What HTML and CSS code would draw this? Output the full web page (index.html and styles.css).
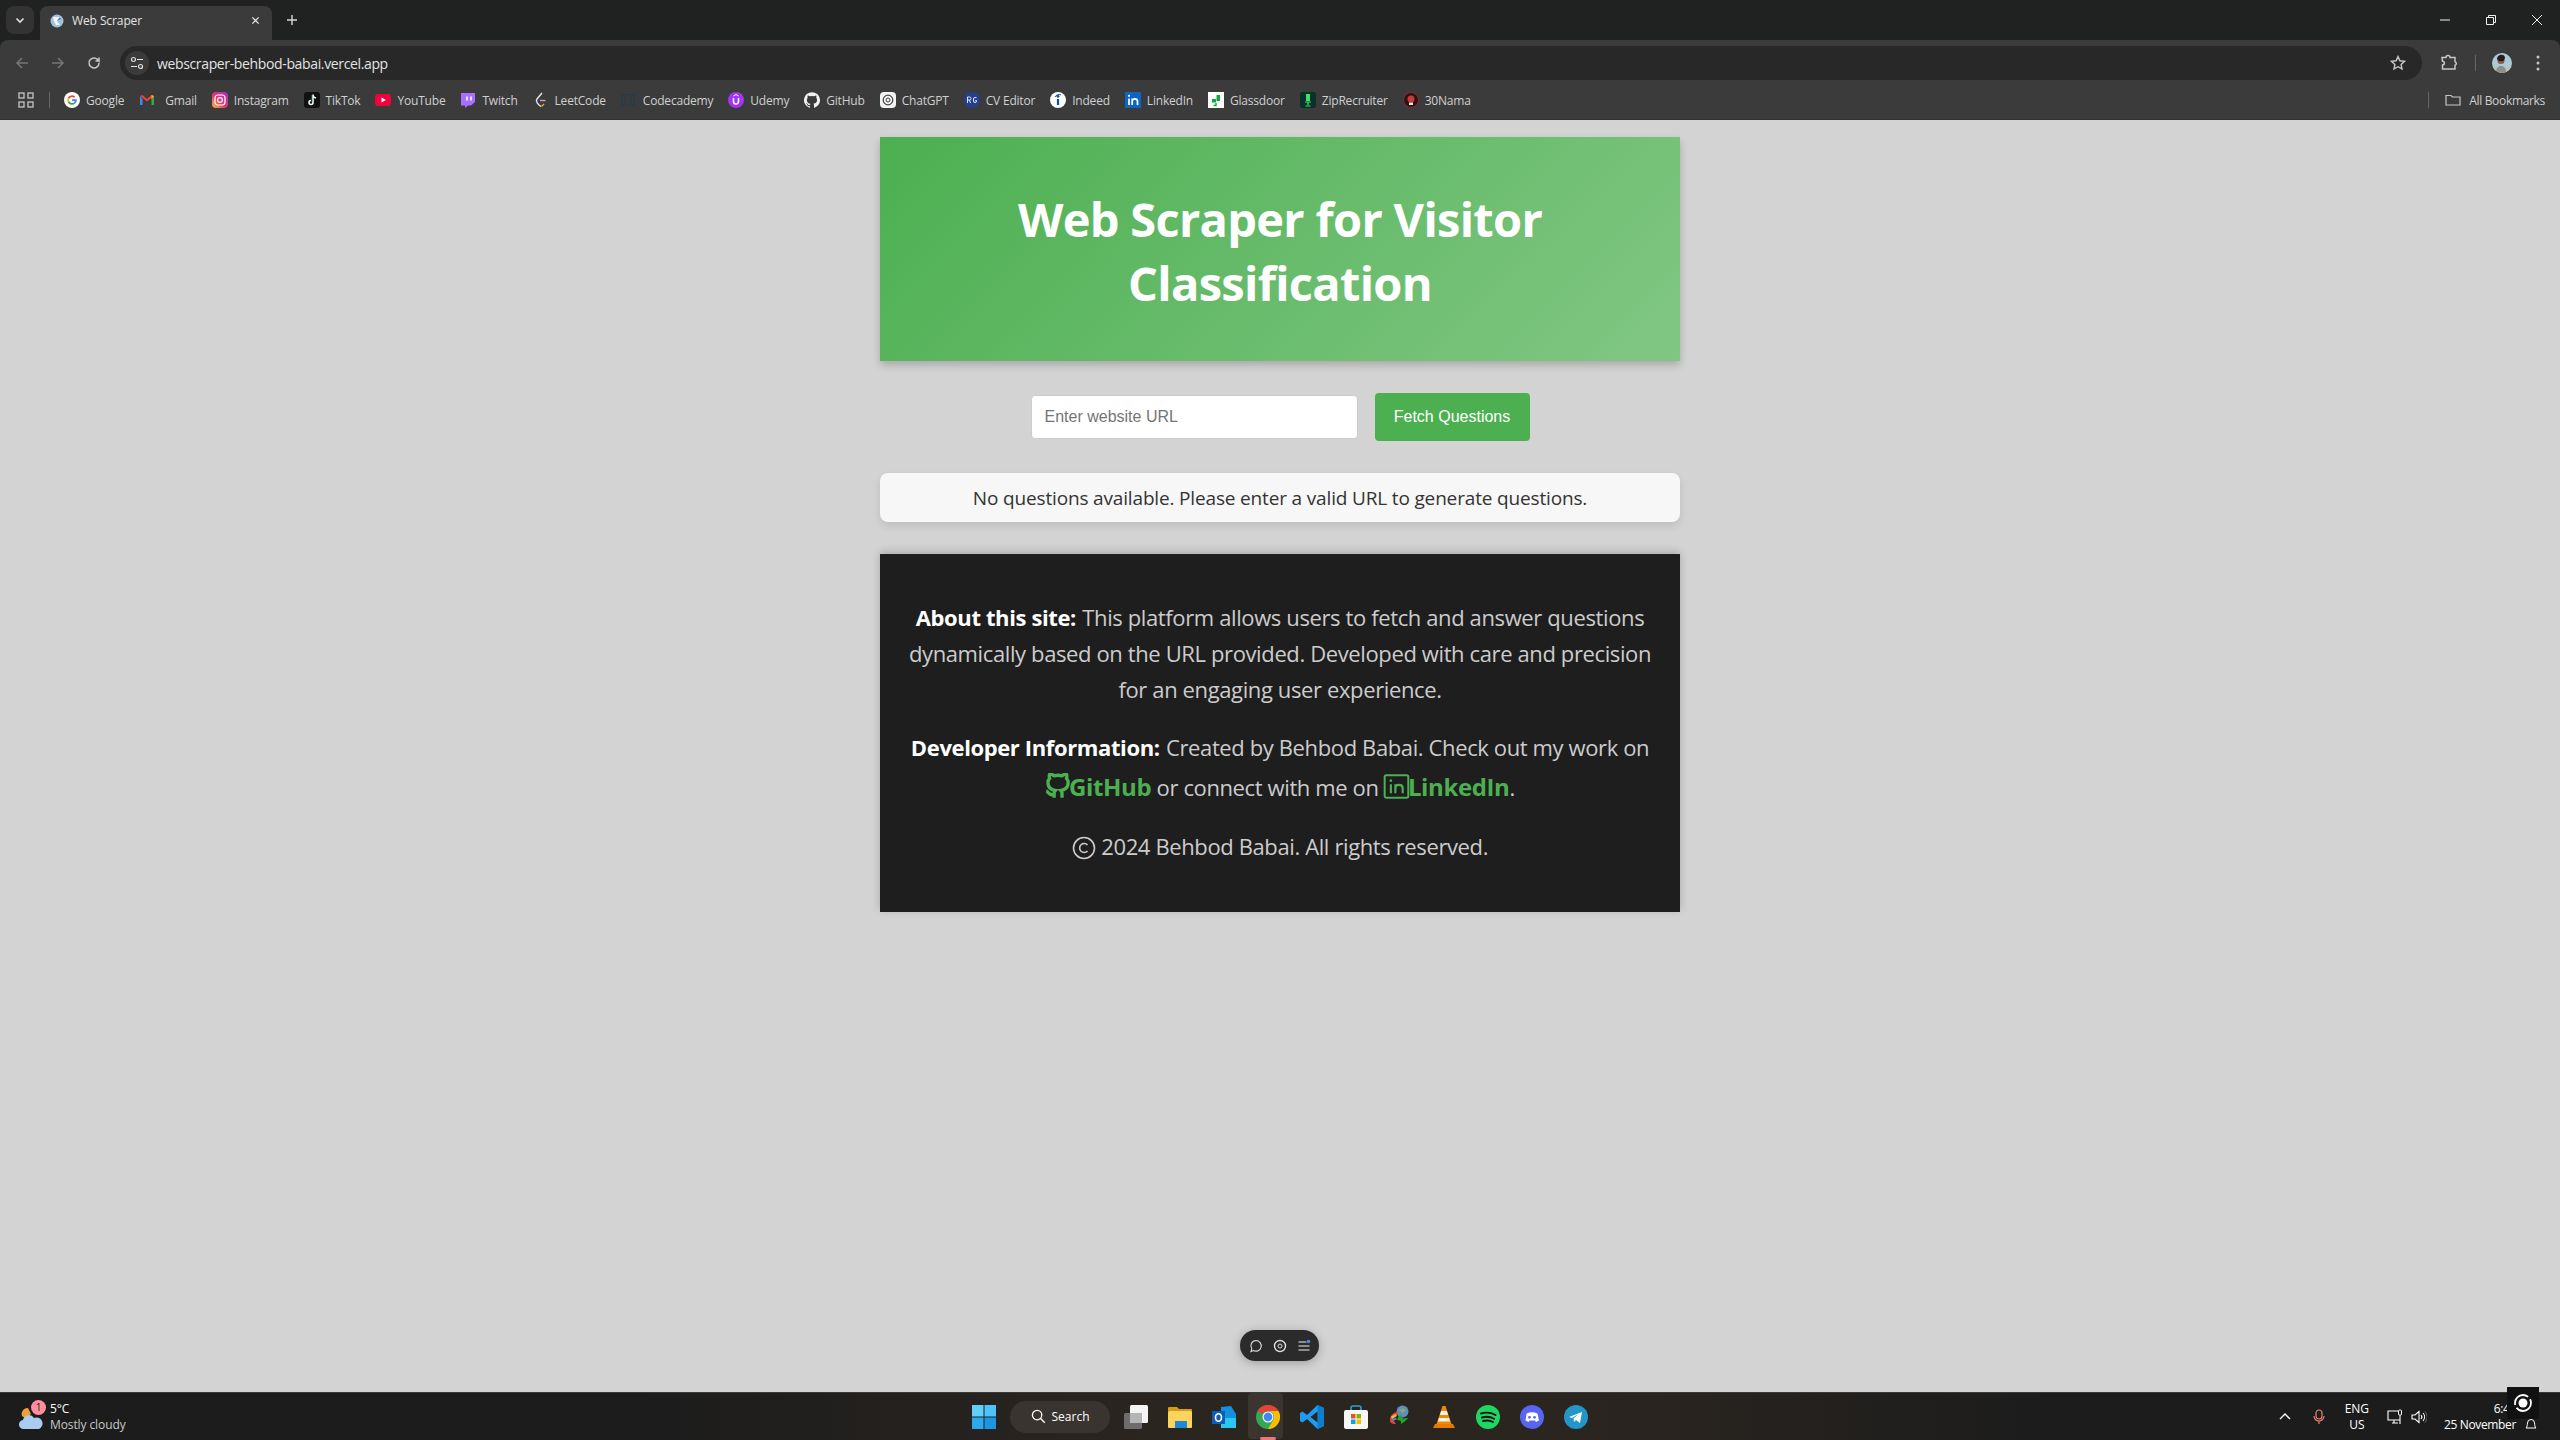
FILE: index.html
```html
<!DOCTYPE html>
<html lang="en">
<head>
    <meta charset="UTF-8">
    <meta name="viewport" content="width=device-width, initial-scale=1.0">
    <title>Web Scraper</title>
    <link rel="stylesheet" href="styles.css">
</head>
<body>

    <!-- browser top -->
    <div class="browser">
    <div class="tabstrip">
        <div class="tab-search"><svg class="ic-12" viewBox="0 0 12 12"><path d="M2.5 4.5 6 8l3.5-3.5" fill="none" stroke="#e3e3e3" stroke-width="1.6"/></svg></div>
        <div class="tab">
            <svg class="favicon" viewBox="0 0 14 14"><circle cx="7" cy="7" r="6.5" fill="#9fc3e0"/><path d="M3 3h8L7 7l3 4H6L4 7z" fill="#f2f6fa"/><path d="M7 7l3-4 1 2z" fill="#3f6f9a"/></svg>
            <span class="tab-title">Web Scraper</span>
            <svg class="tab-close" viewBox="0 0 10 10"><path d="M1.5 1.5l7 7m0-7l-7 7" stroke="#e3e3e3" stroke-width="1.4"/></svg>
        </div>
        <svg class="new-tab" viewBox="0 0 12 12"><path d="M6 1v10M1 6h10" stroke="#d5d5d5" stroke-width="1.4"/></svg>
        <div class="win-controls">
            <svg class="win-btn" viewBox="0 0 12 12"><path d="M1 6h10" stroke="#eee" stroke-width="1"/></svg>
            <svg class="win-btn" viewBox="0 0 12 12"><path d="M1.5 3.5h7v7h-7zM3.5 3.5v-2h7v7h-2" fill="none" stroke="#eee" stroke-width="1"/></svg>
            <svg class="win-btn" viewBox="0 0 12 12"><path d="M1 1l10 10M11 1L1 11" stroke="#eee" stroke-width="1"/></svg>
        </div>
    </div>

    <div class="toolbar">
        <svg class="nav-btn" viewBox="0 0 16 16"><path d="M14 8H3M8 3L3 8l5 5" fill="none" stroke="#777" stroke-width="1.5"/></svg>
        <svg class="nav-btn" viewBox="0 0 16 16"><path d="M2 8h11M8 3l5 5-5 5" fill="none" stroke="#777" stroke-width="1.5"/></svg>
        <svg class="nav-btn" viewBox="0 0 16 16"><path d="M13 8a5 5 0 1 1-1.5-3.6L13 6V2.5M13 6H9.5" fill="none" stroke="#c7c7c7" stroke-width="1.5"/></svg>
        <div class="omnibox">
            <div class="site-info"><svg class="ic-14" viewBox="0 0 14 14"><g fill="none" stroke="#e3e3e3" stroke-width="1.2"><circle cx="3.5" cy="3.5" r="2"/><circle cx="10.5" cy="10.5" r="2"/><path d="M7 3.5h6M1 10.5h6"/></g></svg></div>
            <span class="url">webscraper-behbod-babai.vercel.app</span>
            <svg class="star" viewBox="0 0 16 16"><path d="M8 1.6l1.9 4.2 4.6.5-3.4 3.1.9 4.5L8 11.7l-4 2.2.9-4.5-3.4-3.1 4.6-.5z" fill="none" stroke="#c7c7c7" stroke-width="1.4"/></svg>
        </div>
        <svg class="ext-btn" viewBox="0 0 18 18"><path d="M2 3.5h4a2 2 0 0 1 4 0h5v4.2a1.9 1.9 0 0 1 0 3.6V15H2.5v-4a1.9 1.9 0 0 0 0-3.8z" fill="none" stroke="#c7c7c7" stroke-width="1.5"/></svg>
        <span class="tool-sep"></span>
        <svg class="avatar" viewBox="0 0 20 20"><defs><clipPath id="av"><circle cx="10" cy="10" r="10"/></clipPath></defs><g clip-path="url(#av)"><rect width="20" height="20" fill="#a9cbd8"/><rect y="14" width="20" height="6" fill="#c5c2a8"/><path d="M4 20c0-5 2-7 5-7s5 2 5 7z" fill="#8c8f8a"/><circle cx="9" cy="7.500" r="3.600" fill="#8a5a48"/><path d="M5 6c0-5 8-6 8-1l-1 2H6z" fill="#2a1c1c"/><path d="M6.500 7.500h5" stroke="#1c1414"/></g></svg>
        <svg class="menu-btn" viewBox="0 0 4 16"><circle cx="2" cy="2" r="1.500" fill="#c7c7c7"/><circle cx="2" cy="8" r="1.500" fill="#c7c7c7"/><circle cx="2" cy="14" r="1.500" fill="#c7c7c7"/></svg>
    </div>

    <div class="bookmarks">
        <svg class="apps" viewBox="0 0 16 16"><g fill="none" stroke="#c7c7c7" stroke-width="1.300"><rect x="1" y="1" width="5" height="5"/><rect x="10" y="1" width="5" height="5"/><rect x="1" y="10" width="5" height="5"/><rect x="10" y="10" width="5" height="5"/></g></svg>
        <span class="book-sep"></span>
        <div class="book-list">
            <a class="book"><svg class="book-ic" viewBox="0 0 16 16"><circle cx="8" cy="8" r="8" fill="#fff"/><path d="M8 3.200a4.800 4.800 0 0 1 3.200 1.200L10 5.700A3 3 0 0 0 5.200 7L3.700 5.800A4.800 4.800 0 0 1 8 3.200z" fill="#ea4335"/><path d="M3.700 5.800 5.200 7a3 3 0 0 0 0 2l-1.500 1.200a4.800 4.800 0 0 1 0-4.400z" fill="#fbbc05"/><path d="M3.700 10.200 5.200 9a3 3 0 0 0 4.600 1.500l1.400 1.100A4.800 4.800 0 0 1 3.700 10.200z" fill="#34a853"/><path d="M12.800 7.200H8v1.900h2.700a2.300 2.300 0 0 1-.9 1.400l1.400 1.100a4.800 4.800 0 0 0 1.600-4.400z" fill="#4285f4"/></svg>Google</a>
            <a class="book book-wide"><svg class="book-ic" viewBox="0 0 16 16"><path d="M1 4v9h2.500V7.500z" fill="#4285f4"/><path d="M15 4v9h-2.500V7.500z" fill="#34a853"/><path d="M1 4l2.500-1L8 7l4.500-4L15 4 8 9.500z" fill="#ea4335"/><path d="M12.500 3 15 4l-2.500 3.500z" fill="#fbbc05"/></svg>Gmail</a>
            <a class="book"><svg class="book-ic" viewBox="0 0 16 16"><defs><linearGradient id="ig" x1="0" y1="1" x2="1" y2="0"><stop offset="0" stop-color="#fdc13a"/><stop offset=".45" stop-color="#e8336c"/><stop offset="1" stop-color="#a030d0"/></linearGradient></defs><rect width="16" height="16" rx="4" fill="url(#ig)"/><rect x="3" y="3" width="10" height="10" rx="3" fill="none" stroke="#fff" stroke-width="1.200"/><circle cx="8" cy="8" r="2.400" fill="none" stroke="#fff" stroke-width="1.200"/></svg>Instagram</a>
            <a class="book"><svg class="book-ic" viewBox="0 0 16 16"><rect width="16" height="16" rx="3" fill="#111"/><path d="M9 2.500V10.500a2 2 0 1 1-2-2M9 3c.3 1.800 1.500 2.800 3 3" fill="none" stroke="#fff" stroke-width="1.500"/><path d="M8 3v7.500" stroke="#25f4ee" stroke-width=".5"/></svg>TikTok</a>
            <a class="book"><svg class="book-ic" viewBox="0 0 16 16"><rect y="2" width="16" height="12" rx="3" fill="#f0003c"/><path d="M6.500 5.500v5L11 8z" fill="#fff"/></svg>YouTube</a>
            <a class="book"><svg class="book-ic" viewBox="0 0 16 16"><path d="M1 1h14v9l-4 3.500H8L5 16v-2.500H1z" fill="#a970ff"/><path d="M7 4.500v4M11 4.500v4" stroke="#fff" stroke-width="1.500"/></svg>Twitch</a>
            <a class="book"><svg class="book-ic" viewBox="0 0 16 16"><path d="M9 1 4 7c-1.500 2 0 4 2 6l2 1.500" fill="none" stroke="#e7e7e7" stroke-width="1.400"/><path d="M11 12l-2.500 2.500" stroke="#f89f1b" stroke-width="1.400"/><path d="M7 8.500h5.500" stroke="#b3b3b3" stroke-width="1.400"/></svg>LeetCode</a>
            <a class="book"><svg class="book-ic" viewBox="0 0 16 16"><path d="M3 2.500h-2v11h2M11 2.500h2v11h-2" fill="none" stroke="#1f3a4d" stroke-width="1"/><rect x="4" y="2.500" width="6" height="11" fill="none" stroke="#1f3a4d" stroke-width=".6"/></svg>Codecademy</a>
            <a class="book"><svg class="book-ic" viewBox="0 0 16 16"><circle cx="8" cy="8" r="8" fill="#a435f0"/><path d="M5.500 6v3.500a2.500 2.500 0 0 0 5 0V6" fill="none" stroke="#fff" stroke-width="1.500"/><path d="M5.500 4 8 2.500 10.500 4" fill="none" stroke="#fff" stroke-width="1"/></svg>Udemy</a>
            <a class="book"><svg class="book-ic" viewBox="0 0 24 24"><path fill="#f1f1f1" d="M12 .3a12 12 0 0 0-3.800 23.400c.6.100.8-.3.800-.6v-2c-3.300.7-4-1.600-4-1.600-.6-1.400-1.400-1.800-1.400-1.800-1-.7.100-.7.100-.7 1.200 0 1.900 1.200 1.900 1.200 1 1.800 2.800 1.300 3.500 1 0-.8.400-1.300.7-1.600-2.700-.3-5.500-1.300-5.500-6 0-1.200.5-2.300 1.300-3.100-.2-.4-.6-1.600 0-3.200 0 0 1-.3 3.400 1.200a11.500 11.500 0 0 1 6 0c2.300-1.500 3.300-1.200 3.300-1.200.6 1.600.2 2.800 0 3.200.9.800 1.300 1.900 1.300 3.200 0 4.600-2.800 5.600-5.500 5.900.5.400.9 1 .9 2.200v3.300c0 .3.100.7.8.6A12 12 0 0 0 12 .3"/></svg>GitHub</a>
            <a class="book"><svg class="book-ic" viewBox="0 0 16 16"><rect width="16" height="16" rx="4" fill="#f4f4f4"/><circle cx="8" cy="8" r="4.800" fill="none" stroke="#444" stroke-width="1.200"/><circle cx="8" cy="8" r="2" fill="none" stroke="#444" stroke-width="1"/></svg>ChatGPT</a>
            <a class="book"><svg class="book-ic" viewBox="0 0 16 16"><circle cx="8" cy="8" r="8" fill="#24408e"/><path d="M3.500 11V5h2a1.500 1.500 0 0 1 0 3h-2m2 0 1 3M12.500 5.500h-1.500a1.500 1.500 0 0 0-1.500 1.500v2a1.500 1.500 0 0 0 3 0V8.500h-1.200" fill="none" stroke="#dfe6f5" stroke-width="1"/></svg>CV Editor</a>
            <a class="book"><svg class="book-ic" viewBox="0 0 16 16"><circle cx="8" cy="8" r="8" fill="#fff"/><path d="M8 7v6" stroke="#0a4ea8" stroke-width="2.200"/><circle cx="8" cy="4.300" r="1.400" fill="#0a4ea8"/><path d="M5 5C6 2.800 9 2 11 2.800" fill="none" stroke="#0a4ea8"/></svg>Indeed</a>
            <a class="book"><svg class="book-ic" viewBox="0 0 16 16"><rect width="16" height="16" fill="#0a66c2"/><path d="M4 6.500V13M7.200 13V6.500m0 3c0-3.500 5.300-3.500 5.300 0V13" fill="none" stroke="#fff" stroke-width="1.700"/><circle cx="4" cy="3.800" r="1.100" fill="#fff"/></svg>LinkedIn</a>
            <a class="book"><svg class="book-ic" viewBox="0 0 16 16"><rect width="16" height="16" fill="#fff"/><path d="M8.500 3h3.500v6H8.500zM8 10.500H4V7h4z" fill="#0caa41"/><path d="M8 11v2.500H5.500" fill="none" stroke="#0caa41" stroke-width="1.500"/></svg>Glassdoor</a>
            <a class="book"><svg class="book-ic" viewBox="0 0 16 16"><rect width="16" height="16" rx="2" fill="#08312a"/><path d="M6 2h4v7H6z" fill="#3fe06a"/><path d="M5 10h6M8 10v3M5.500 14h5" stroke="#3fe06a" stroke-width="1.200"/></svg>ZipRecruiter</a>
            <a class="book"><svg class="book-ic" viewBox="0 0 16 16"><circle cx="8" cy="8" r="7.500" fill="#2a1416" stroke="#8c2b2b"/><circle cx="8" cy="7" r="3.500" fill="#c8393b"/><path d="M6 10.500h4V13H6z" fill="#e5e5e5"/></svg>30Nama</a>
        </div>
        <span class="book-sep book-sep-end"></span>
        <a class="book all-books"><svg class="book-ic" viewBox="0 0 16 16"><path d="M1 3.500h5l1.500 1.500H15v8H1z" fill="none" stroke="#c7c7c7" stroke-width="1.200"/></svg>All Bookmarks</a>
    </div>
    </div>

    <!-- pagina -->
    <main class="page">
        <header class="hero">
            <h1>Web Scraper for Visitor Classification</h1>
        </header>

        <form class="url-form">
            <input type="text" class="url-input" placeholder="Enter website URL">
            <button type="button" class="fetch-btn">Fetch Questions</button>
        </form>

        <div class="notice">No questions available. Please enter a valid URL to generate questions.</div>

        <footer class="about">
            <p><strong>About this site:</strong> This platform allows users to fetch and answer questions dynamically based on the URL provided. Developed with care and precision for an engaging user experience.</p>
            <p class="dev-line"><strong>Developer Information:</strong> Created by Behbod Babai. Check out my work on
                <a class="about-link"><svg class="link-ic" viewBox="0 0 24 24"><path d="M9 19c-5 1.500-5-2.500-7-3m14 6v-3.870a3.370 3.370 0 0 0-.94-2.610c3.140-.35 6.440-1.540 6.440-7A5.440 5.440 0 0 0 20 4.770 5.070 5.070 0 0 0 19.910 1S18.730.65 16 2.480a13.380 13.380 0 0 0-7 0C6.270.65 5.090 1 5.090 1A5.070 5.070 0 0 0 5 4.770a5.440 5.440 0 0 0-1.500 3.750c0 5.420 3.300 6.610 6.440 7A3.370 3.370 0 0 0 9 18.130V22" fill="none" stroke="#4caf50" stroke-width="3"/></svg>GitHub</a>
                or connect with me on
                <a class="about-link"><svg class="link-ic" viewBox="0 0 24 24"><rect x="1.500" y="2" width="21" height="20" rx="1.500" fill="none" stroke="#4caf50" stroke-width="1.800"/><path d="M7 10v8M11 18v-8m0 3.500c0-4 6.500-4 6.500 0V18" fill="none" stroke="#4caf50" stroke-width="1.900"/><circle cx="7" cy="6.800" r="1.200" fill="#4caf50"/></svg>LinkedIn</a>.</p>
            <p class="copy"><svg class="copy-ic" viewBox="0 0 24 24"><circle cx="12" cy="12" r="10.500" fill="none" stroke="#ccc" stroke-width="1.600"/><path d="M15.500 9a4.500 4.500 0 1 0 0 6" fill="none" stroke="#ccc" stroke-width="1.600"/></svg> 2024 Behbod Babai. All rights reserved.</p>
        </footer>

        <!-- barra flotante -->
        <div class="float-pill">
            <svg class="ic-14" viewBox="0 0 14 14"><path d="M7 1.500a5.300 5.300 0 1 1-2.500 10L2 12.500l.8-2.700A5.300 5.300 0 0 1 7 1.500z" fill="none" stroke="#ddd" stroke-width="1.100"/></svg>
            <svg class="ic-14" viewBox="0 0 14 14"><circle cx="7" cy="7" r="5.500" fill="none" stroke="#ddd" stroke-width="1.400"/><circle cx="7" cy="7" r="2" fill="none" stroke="#ddd"/></svg>
            <svg class="ic-14" viewBox="0 0 14 14"><path d="M1.500 3h8M1.500 7h11M1.500 11h11" stroke="#eee" stroke-width="1.200"/><circle cx="11.500" cy="2.500" r="1.800" fill="#3b8eea"/></svg>
        </div>
    </main>

    <!-- barra de tareas -->
    <div class="taskbar">
        <div class="weather">
            <div class="weather-ic">
                <svg class="weather-svg" viewBox="0 0 24 26"><path d="M3 12a6 6 0 0 1 6-8l3 6-6 4z" fill="#f0a030"/><path d="M5 25a4.500 4.500 0 0 1-1-9 6 6 0 0 1 11-2 5 5 0 0 1 5 11z" fill="#a9cdf0"/></svg>
                <span class="weather-badge">1</span>
            </div>
            <div class="weather-text">
                <span class="temp">5°C</span>
                <span class="sky">Mostly cloudy</span>
            </div>
        </div>

        <div class="dock">
            <svg class="dock-ic" viewBox="0 0 24 24"><g fill="#4cc2ff"><rect width="11.500" height="11.500" fill="#5fd0fa"/><rect x="12.500" width="11.500" height="11.500" fill="#4cc2ff"/><rect y="12.500" width="11.500" height="11.500" fill="#2ca8ee"/><rect x="12.500" y="12.500" width="11.500" height="11.500" fill="#1a96e2"/></g></svg>
            <div class="search-pill"><svg class="search-ic" viewBox="0 0 16 16"><circle cx="6.500" cy="6.500" r="5" fill="none" stroke="#fff" stroke-width="1.400"/><path d="M10.200 10.200l4.500 4.500" stroke="#fff" stroke-width="1.500"/></svg>Search</div>
            <svg class="dock-ic" viewBox="0 0 24 24"><rect x="6" y="0" width="18" height="18" rx="1.500" fill="#f4f4f4"/><rect x="0" y="8" width="18" height="16" rx="1.500" fill="#6d6d6d"/><rect x="6" y="8" width="12" height="10" fill="#b5b5b5"/></svg>
            <svg class="dock-ic" viewBox="0 0 24 24"><path d="M0 3a1 1 0 0 1 1-1h8l2 2h12a1 1 0 0 1 1 1v1H0z" fill="#d69c13"/><rect y="6" width="24" height="17" rx="1" fill="#fcd45c"/><rect x="7" y="16" width="12" height="7" fill="#1e88d8"/></svg>
            <svg class="dock-ic" viewBox="0 0 24 24"><path d="M9 2 19 1l5 8v14H9z" fill="#1490df"/><path d="M9 13h15v10H9z" fill="#28c8f0"/><rect y="6" width="13" height="13" fill="#0a5fb4"/><ellipse cx="6.500" cy="12.500" rx="3" ry="3.800" fill="none" stroke="#fff" stroke-width="1.600"/></svg>
            <div class="dock-active">
                <svg class="dock-ic" viewBox="0 0 24 24"><circle cx="12" cy="12" r="12" fill="#34a853"/><path d="M12 0a12 12 0 0 1 10.400 6H12a6 6 0 0 0-5.200 3L1.600 6A12 12 0 0 1 12 0z" fill="#ea4335"/><path d="M22.400 6A12 12 0 0 1 12 24l5.200-9A6 6 0 0 0 12 6z" fill="#fbbc05"/><circle cx="12" cy="12" r="5.500" fill="#fff"/><circle cx="12" cy="12" r="4.400" fill="#4285f4"/></svg>
                <span class="active-bar"></span>
            </div>
            <svg class="dock-ic" viewBox="0 0 24 24"><path d="M17.500 0 24 3v18l-6.500 3L7 14l-4.500 3.500L0 16V8l2.500-1.500L7 10z" fill="#1f9cf0"/><path d="M17.500 0 24 3v18l-6.500 3z" fill="#0a7fcf"/><path d="M17.500 6.500 10.500 12l7 5.500z" fill="#2b2520"/></svg>
            <svg class="dock-ic" viewBox="0 0 24 24"><path d="M7 6V3a2 2 0 0 1 2-2h6a2 2 0 0 1 2 2v3" fill="none" stroke="#2a9fd8" stroke-width="1.600"/><rect y="5" width="24" height="19" rx="2" fill="#f7f7f7"/><rect x="7" y="9" width="4.500" height="4.500" fill="#f25022"/><rect x="12.500" y="9" width="4.500" height="4.500" fill="#7fba00"/><rect x="7" y="14.500" width="4.500" height="4.500" fill="#00a4ef"/><rect x="12.500" y="14.500" width="4.500" height="4.500" fill="#ffb900"/></svg>
            <svg class="dock-ic" viewBox="0 0 24 24"><circle cx="14.500" cy="6.500" r="6" fill="#5f8fc0"/><path d="M11 5c2-2 5-2 7 0l-3 3z" fill="#7fb069"/><path d="M2 15a8 8 0 0 1 8-8l.5 2.500a5 5 0 0 0-5.500 5.500l3 4C4 19 2 18 2 15z" fill="#e24a3b"/><path d="M3 11.500l5-2.500 1 2-5 3z" fill="#f4b93a"/><path d="M4 14l4-1.500.5 2L5 16z" fill="#3f8fdc"/><path d="M11 10.500h3l.5 3 6-.5-7 6-1-3.500-3.500-.5z" fill="#22a82c"/></svg>
            <svg class="dock-ic" viewBox="0 0 24 24"><path d="M10.500 1h3l6 18H4.500z" fill="#f08a00"/><path d="M9.200 6h5.600l1.300 4H7.900zM7 13h10l1 3.500H6z" fill="#f4f4f4"/><path d="M3 19h18l2 4H1z" fill="#e87a00"/></svg>
            <svg class="dock-ic" viewBox="0 0 24 24"><circle cx="12" cy="12" r="12" fill="#1ed760"/><path d="M5 8.500c5-1.500 10-1 14.500 1.500M6 12.500c4-1.200 8.500-.8 12 1.200M7 16c3.500-1 7-.6 10 1" fill="none" stroke="#111" stroke-width="1.900" stroke-linecap="round"/></svg>
            <svg class="dock-ic" viewBox="0 0 24 24"><circle cx="12" cy="12" r="12" fill="#5865f2"/><path d="M6.500 8.500c3.500-1.700 7.500-1.700 11 0l1.500 7-3 1.500-1-1.500h-5.500L8.500 17l-3-1.500z" fill="#fff"/><circle cx="9.500" cy="12.300" r="1.400" fill="#5865f2"/><circle cx="14.500" cy="12.300" r="1.400" fill="#5865f2"/></svg>
            <svg class="dock-ic" viewBox="0 0 24 24"><circle cx="12" cy="12" r="12" fill="#2296c9"/><path d="M5 12l13-5-2 11-4-3-2 2-.5-3.500 5-4.500-6.500 4z" fill="#fff"/></svg>
        </div>

        <div class="tray">
            <svg class="tray-ic chevron" viewBox="0 0 12 12"><path d="M1 8l5-5 5 5" fill="none" stroke="#fff" stroke-width="1.400"/></svg>
            <svg class="tray-ic mic" viewBox="0 0 12 16"><rect x="3" y="1" width="6" height="9" rx="3" fill="none" stroke="#e9806e" stroke-width="1.200"/><path d="M1 7a5 5 0 0 0 10 0M6 12v3" fill="none" stroke="#e9806e" stroke-width="1.200"/></svg>
            <div class="lang"><span>ENG</span><span>US</span></div>
            <svg class="tray-ic net" viewBox="0 0 16 16"><path d="M11 2H1v9h12V8M5 14h6M7 11v3M13 6v9" fill="none" stroke="#fff" stroke-width="1.100"/><rect x="11.500" y="1" width="3" height="5" rx="1" fill="none" stroke="#fff"/></svg>
            <svg class="tray-ic vol" viewBox="0 0 16 16"><path d="M1 6h3l4-3.500v11L4 10H1z" fill="none" stroke="#fff" stroke-width="1.100"/><path d="M10 6a3 3 0 0 1 0 4M12 4a6 6 0 0 1 0 8" fill="none" stroke="#fff" stroke-width="1.100"/><path d="M14 2.500a8 8 0 0 1 0 11" fill="none" stroke="#666"/></svg>
            <div class="clock"><span>6:45</span><span>25 November</span></div>
            <svg class="tray-ic bell" viewBox="0 0 14 14"><path d="M2 11c1.500-1 1-3 1.500-5a3.500 3.500 0 0 1 7 0c.5 2 0 4 1.500 5z" fill="none" stroke="#fff"/></svg>
        </div>
        <div class="rec-overlay"><svg class="rec-ic" viewBox="0 0 24 24"><circle cx="12" cy="12" r="8" fill="none" stroke="#fff" stroke-width="1.800" stroke-dasharray="20 3"/><circle cx="12" cy="12" r="4.500" fill="#fff"/></svg></div>
    </div>

</body>
</html>
```
FILE: styles.css
```css
* {
    box-sizing: border-box;
}

html, body {
    margin: 0;
    padding: 0;
    height: 100%;
}

body {
    font-family: 'Open Sans', 'Noto Sans', sans-serif;
    background-color: #d3d3d3;
    display: flex;
    flex-direction: column;
    height: 100vh;
    overflow: hidden;
}

svg {
    display: block;
    flex-shrink: 0;
}

.ic-12 { width: 12px; height: 12px; }
.ic-14 { width: 14px; height: 14px; }

.browser {
    background-color: #202221;
    flex-shrink: 0;
}

/* tabs */
.tabstrip {
    height: 40px;
    display: flex;
    align-items: flex-end;
    padding-left: 6px;
}

.tab-search {
    width: 28px;
    height: 28px;
    margin-bottom: 6px;
    border-radius: 8px;
    background-color: #333;
    display: flex;
    align-items: center;
    justify-content: center;
}

.tab {
    width: 232px;
    height: 34px;
    margin-left: 6px;
    padding: 0 10px;
    background-color: #3b3b3b;
    border-radius: 8px 8px 0 0;
    display: flex;
    align-items: center;
    color: #e3e3e3;
}

.favicon { width: 14px; height: 14px; margin-top: -5px; }

.tab-title {
    margin: -5px 0 0 8px;
    font-size: 12px;
    letter-spacing: -0.1px;
    flex: 1;
}

.tab-close { width: 9px; height: 9px; margin: -5px 2px 0 0; }

.new-tab {
    width: 12px;
    height: 12px;
    margin: 0 0 14px 14px;
}

.win-controls {
    margin-left: auto;
    align-self: flex-start;
    display: flex;
    gap: 34px;
    padding: 14px 17px 0 0;
}

.win-btn { width: 12px; height: 12px; }

/* barra de direccion */
.toolbar {
    height: 42px;
    background-color: #3b3b3b;
    border-radius: 8px 8px 0 0;
    display: flex;
    align-items: flex-start;
    padding-top: 6px;
}

.nav-btn {
    width: 16px;
    height: 16px;
    margin: 9px 0 0 20px;
}

.nav-btn:first-child { margin-left: 14px; }

.omnibox {
    width: 2302px;
    height: 34px;
    margin-left: 18px;
    padding: 0 16px 0 5px;
    background-color: #282828;
    border-radius: 17px;
    display: flex;
    align-items: center;
}

.site-info {
    width: 24px;
    height: 24px;
    border-radius: 50%;
    background-color: #3b3b3b;
    display: flex;
    align-items: center;
    justify-content: center;
}

.url {
    margin-left: 8px;
    font-size: 14px;
    letter-spacing: -0.36px;
    color: #e3e3e3;
    flex: 1;
}

.star { width: 16px; height: 16px; }

.ext-btn {
    width: 18px;
    height: 18px;
    margin: 8px 0 0 18px;
}

.tool-sep {
    width: 1px;
    height: 16px;
    margin: 9px 0 0 17px;
    background-color: #666;
}

.avatar {
    width: 20px;
    height: 20px;
    margin: 7px 0 0 16px;
}

.menu-btn {
    width: 4px;
    height: 16px;
    margin: 9px 0 0 24px;
}

/* marcadores */
.bookmarks {
    height: 38px;
    background-color: #3b3b3b;
    border-bottom: 1px solid #333;
    display: flex;
    align-items: center;
    padding-left: 18px;
    padding-bottom: 1px;
}

.apps { width: 16px; height: 16px; }

.book-sep {
    width: 1px;
    height: 16px;
    margin: 0 14px 0 15px;
    background-color: #666;
}

.book-list {
    display: flex;
    align-items: center;
    gap: 15px;
}

.book {
    display: flex;
    align-items: center;
    gap: 6px;
    font-size: 12px;
    letter-spacing: -0.2px;
    color: #d0d0d0;
    white-space: nowrap;
}

.book-wide { gap: 10px; }

.book-ic { width: 16px; height: 16px; }

.book-sep-end { margin: 0 16px 0 auto; }

.all-books {
    margin-right: 15px;
    gap: 8px;
    letter-spacing: -0.32px;
}

/* pagina */
.page {
    flex: 1;
    display: flex;
    flex-direction: column;
    align-items: center;
    gap: 32px;
    padding-top: 17px;
    position: relative;
}

.hero {
    width: 800px;
    height: 224px;
    padding: 50px 100px 0;
    background: linear-gradient(135deg, #4caf50, #81c784);
    box-shadow: 0 4px 8px rgba(0, 0, 0, 0.2);
}

.hero h1 {
    margin: 0;
    text-align: center;
    color: #ffffff;
    font-size: 47px;
    line-height: 64px;
    font-weight: 700;
    letter-spacing: -0.7px;
}

.url-form {
    display: flex;
    align-items: center;
    gap: 17px;
}

.url-input {
    width: 327px;
    height: 44px;
    padding: 0 13px;
    border: 1px solid #ccc;
    border-radius: 4px;
    font-family: 'Liberation Sans', Arial, sans-serif;
    font-size: 16px;
    outline: none;
}

.fetch-btn {
    width: 155px;
    height: 48px;
    border: none;
    border-radius: 4px;
    background-color: #4caf50;
    color: #ffffff;
    font-family: 'Liberation Sans', Arial, sans-serif;
    font-size: 16px;
}

.notice {
    width: 800px;
    height: 49px;
    background-color: #f7f7f7;
    border-radius: 8px;
    box-shadow: 0 4px 8px rgba(0, 0, 0, 0.1);
    display: flex;
    align-items: center;
    justify-content: center;
    color: #333;
    font-size: 19px;
    letter-spacing: -0.16px;
}

.about {
    width: 800px;
    height: 358px;
    padding: 23px 24px 0;
    background-color: #1e1e1e;
    box-shadow: 0 -2px 8px rgba(0, 0, 0, 0.2);
    color: #ccc;
    font-size: 22px;
    letter-spacing: -0.38px;
    line-height: 36px;
    text-align: center;
}

.about p {
    margin: 22px 0;
}

.about .dev-line {
    margin-bottom: 19px;
}

.about .copy {
    margin-top: 19px;
}

.about strong {
    color: #ffffff;
    font-weight: 700;
    margin-right: 1px;
}

.about-link {
    color: #4caf50;
    font-weight: 700;
    font-size: 24px;
    line-height: 44px;
    text-decoration: none;
}

.link-ic {
    display: inline-block;
    width: 27px;
    height: 27px;
    margin: 0 -2px 0 -1px;
    vertical-align: -4px;
}

.copy-ic {
    display: inline-block;
    width: 24px;
    height: 24px;
    vertical-align: -5px;
}

.float-pill {
    position: absolute;
    left: 1240px;
    bottom: 31px;
    width: 79px;
    height: 31px;
    background-color: #2b2b2b;
    border-radius: 16px;
    box-shadow: 0 2px 10px rgba(0, 0, 0, 0.25);
    display: flex;
    align-items: center;
    justify-content: center;
    gap: 10px;
}

/* barra de tareas */
.taskbar {
    height: 48px;
    background: linear-gradient(90deg, #1c1c1c 25%, #2b2520 45%, #2b2520 62%, #1c1c1c 80%);
    border-top: 1px solid #3a3a3a;
    display: grid;
    grid-template-columns: 1fr auto 1fr;
    align-items: center;
    color: #ffffff;
    flex-shrink: 0;
    position: relative;
}

.weather {
    display: flex;
    align-items: center;
    gap: 7px;
    padding-left: 19px;
}

.weather-ic { position: relative; }

.weather-svg { width: 24px; height: 26px; }

.weather-badge {
    position: absolute;
    top: -4px;
    right: -3px;
    width: 15px;
    height: 15px;
    border-radius: 50%;
    background-color: #ff8d9c;
    color: #222;
    font-size: 10px;
    line-height: 15px;
    text-align: center;
}

.weather-text {
    display: flex;
    flex-direction: column;
    font-size: 12px;
    letter-spacing: -0.1px;
    line-height: 16px;
}

.sky { color: #c8c8c8; }

.dock {
    display: flex;
    align-items: center;
    gap: 20px;
}

.dock-ic { width: 24px; height: 24px; }

.search-pill {
    width: 100px;
    height: 32px;
    margin: 0 -6px 0 -6px;
    border-radius: 16px;
    background-color: #3a3430;
    display: flex;
    align-items: center;
    justify-content: center;
    gap: 6px;
    font-size: 12px;
}

.search-ic { width: 15px; height: 15px; }

.dock-active {
    position: relative;
}

.dock-active::before {
    content: "";
    position: absolute;
    left: -8px;
    top: -12px;
    width: 35px;
    height: 46px;
    border-radius: 4px;
    background-color: #3a352f;
}

.dock-active .dock-ic { position: relative; }

.active-bar {
    position: absolute;
    left: 4px;
    bottom: -11px;
    width: 16px;
    height: 3px;
    border-radius: 2px;
    background-color: #f0757a;
}

.tray {
    display: flex;
    align-items: center;
    justify-content: flex-end;
    font-size: 12px;
    letter-spacing: -0.1px;
    padding-right: 22px;
}

.tray-ic { width: 16px; height: 16px; }

.chevron { width: 12px; height: 12px; }

.mic { margin-left: 20px; }

.lang {
    display: flex;
    flex-direction: column;
    align-items: center;
    line-height: 16px;
    margin-left: 18px;
}

.net { margin-left: 18px; }

.vol { margin-left: 8px; }

.clock {
    display: flex;
    flex-direction: column;
    align-items: flex-end;
    line-height: 16px;
    letter-spacing: -0.35px;
    margin-left: 17px;
}

.bell { width: 14px; height: 14px; margin: 14px 0 0 8px; }

.rec-overlay {
    position: absolute;
    right: 21px;
    top: -6px;
    width: 32px;
    height: 32px;
    background-color: #111;
    display: flex;
    align-items: center;
    justify-content: center;
}

.rec-ic { width: 24px; height: 24px; }
```
